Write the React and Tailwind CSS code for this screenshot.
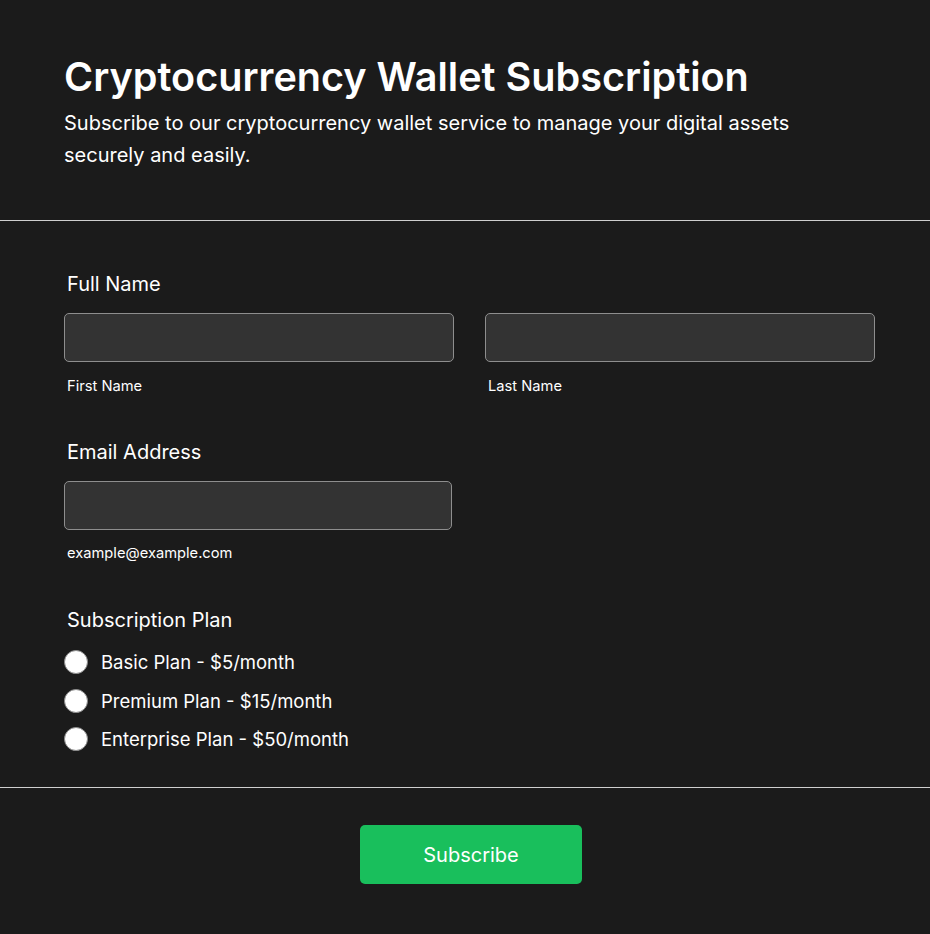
export default function App() {
  const font = { fontFamily: "Inter, 'Noto Sans', sans-serif", fontOpticalSizing: "none" };
  const plans = [
    "Basic Plan - $5/month",
    "Premium Plan - $15/month",
    "Enterprise Plan - $50/month",
  ];
  return (
    <div className="min-h-[934px] w-full bg-[#1b1b1b] text-white" style={font}>
      <header className="px-16 pt-[53px] pb-[49px]">
        <h1 className="text-[39.6px] font-semibold leading-[48px]">
          Cryptocurrency Wallet Subscription
        </h1>
        <p className="mt-[6px] text-[20px] leading-[32px] max-w-[760px]">
          Subscribe to our cryptocurrency wallet service to manage your digital assets securely and easily.
        </p>
      </header>
      <div className="h-px bg-[#cfcfcf]" />
      <section className="pl-16 pr-[55px] pt-[48px] pb-[36px]">
        <div className="text-[20px] leading-[30px] pl-[3px]">Full Name</div>
        <div className="mt-[14px] grid grid-cols-2 gap-[31px]">
          <div>
            <div className="h-[49px] rounded-[5px] border border-[#8e8e8e] bg-[#333333]" />
            <div className="mt-[12px] pl-[3px] text-[14.7px] leading-[24px]">First Name</div>
          </div>
          <div>
            <div className="h-[49px] rounded-[5px] border border-[#8e8e8e] bg-[#333333]" />
            <div className="mt-[12px] pl-[3px] text-[14.7px] leading-[24px]">Last Name</div>
          </div>
        </div>
        <div className="mt-[39px] text-[20px] leading-[30px] pl-[3px]">Email Address</div>
        <div className="mt-[14px] w-[388px]">
          <div className="h-[49px] rounded-[5px] border border-[#8e8e8e] bg-[#333333]" />
          <div className="mt-[11px] pl-[3px] text-[14.7px] leading-[24px]">example@example.com</div>
        </div>
        <div className="mt-[40px] text-[20px] leading-[30px] pl-[3px]">Subscription Plan</div>
        <div className="mt-[15px] flex flex-col gap-[14.5px]">
          {plans.map((p) => (
            <label key={p} className="flex items-center gap-[13px] h-[24px]">
              <span className="block h-[24px] w-[24px] rounded-full bg-white border border-[#8a8a8a]" />
              <span className="text-[18.5px] leading-[24px]">{p}</span>
            </label>
          ))}
        </div>
      </section>
      <div className="h-px bg-[#cfcfcf]" />
      <div className="pl-[67px] pr-[55px] pt-[37px] pb-[50px] flex justify-center">
        <button className="h-[59px] w-[222px] rounded-[5px] bg-[#19bf5c] text-[20px] text-white">
          Subscribe
        </button>
      </div>
    </div>
  );
}
